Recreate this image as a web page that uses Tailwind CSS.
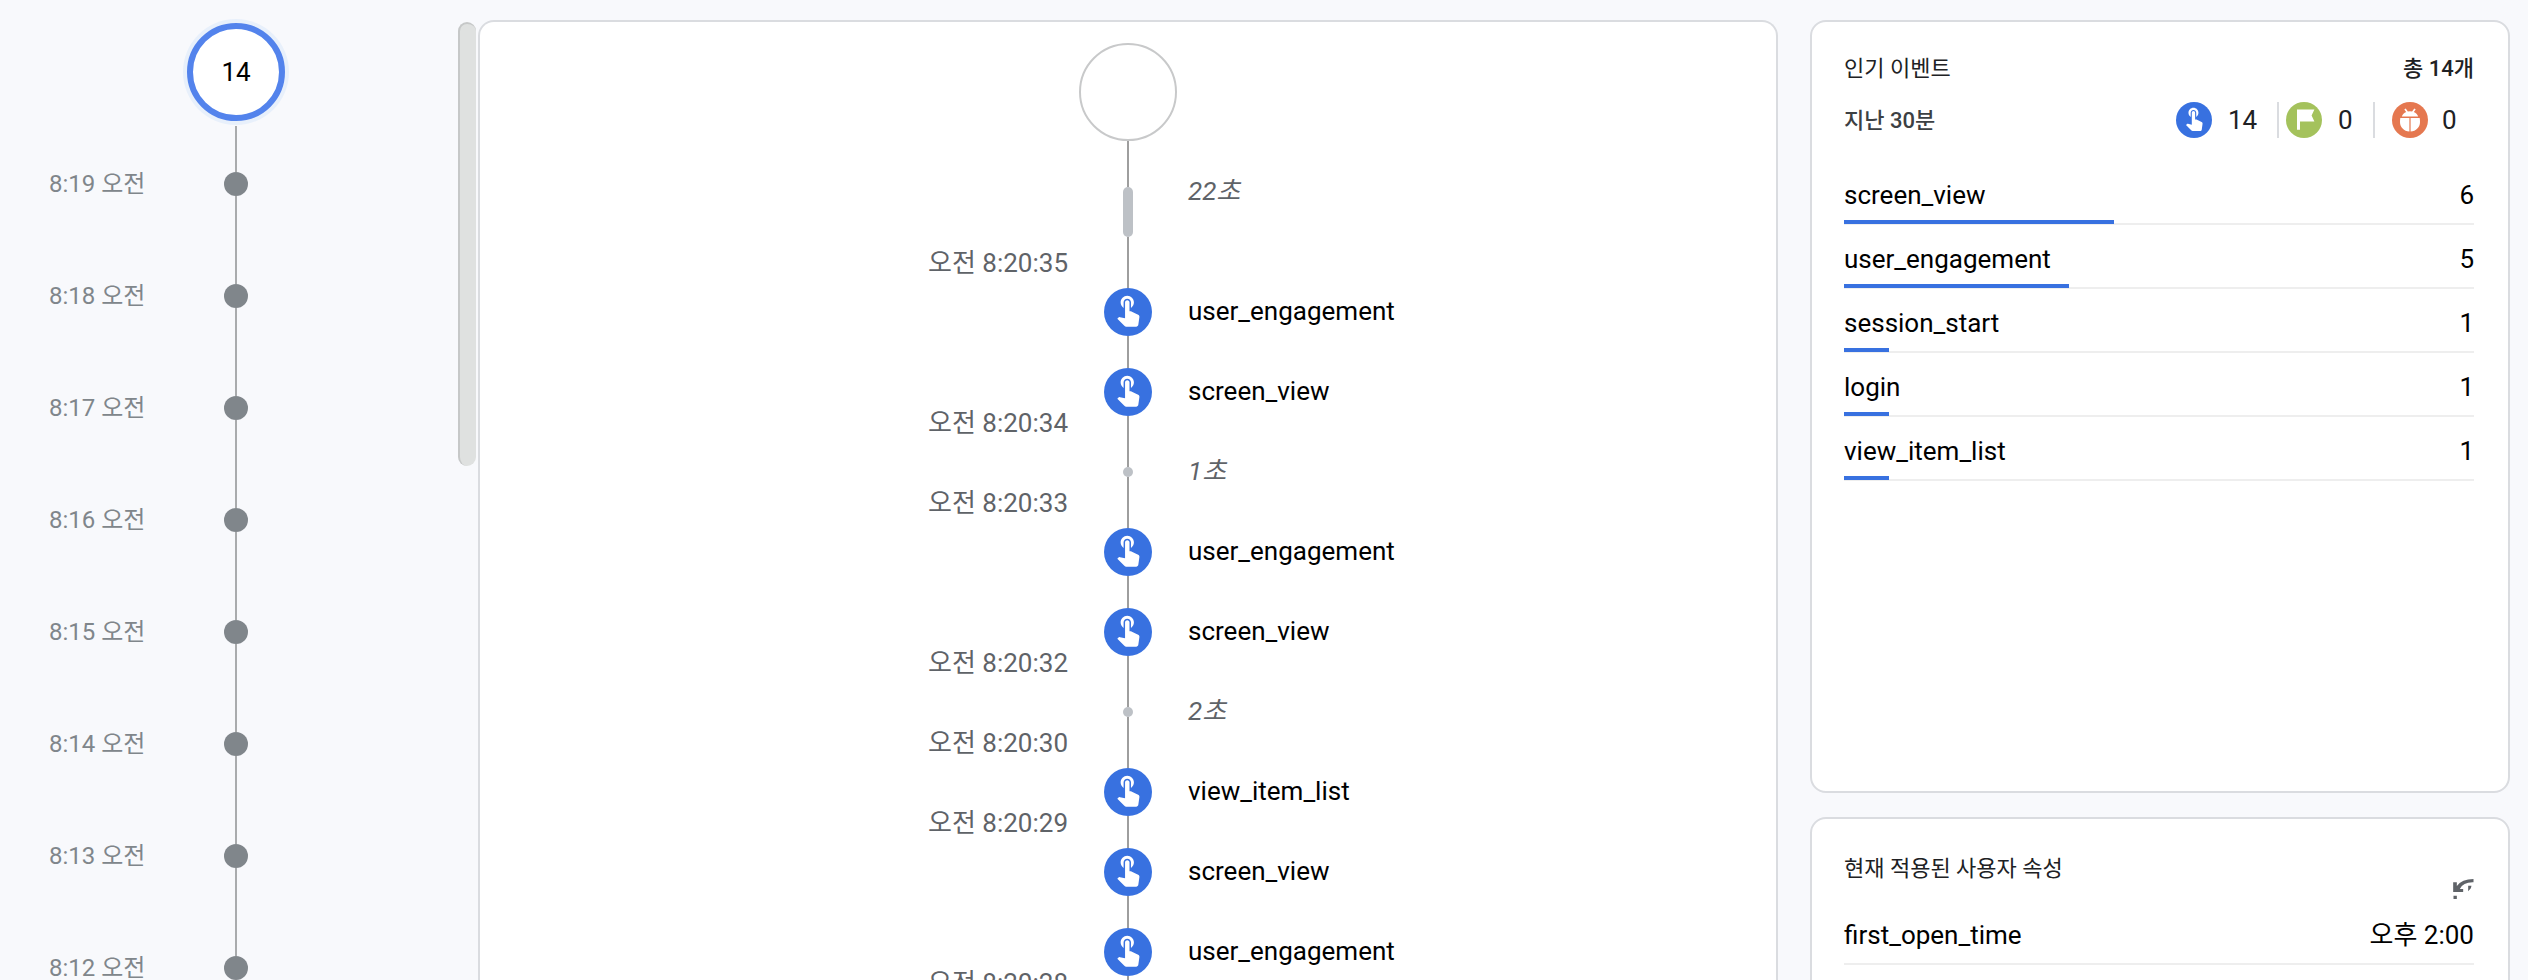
<!DOCTYPE html>
<html lang="ko">
<head>
<meta charset="utf-8">
<title>DebugView</title>
<script src="https://cdn.jsdelivr.net/npm/@tailwindcss/browser@4"></script>
</head>
<body class="flex h-screen overflow-hidden bg-[#f8f9fc] font-['Roboto','Noto_Sans_CJK_KR',sans-serif] text-[26px] text-black">

<svg class="hidden" aria-hidden="true">
  <symbol id="touch" viewBox="0 0 48 48">
    <circle cx="24" cy="24" r="24" fill="#3871e0"/>
    <path transform="translate(6.3 3.3) scale(1.476)" fill="#fff" d="M9 11.24V7.5C9 6.12 10.12 5 11.5 5S14 6.12 14 7.5v3.74c1.21-.81 2-2.18 2-3.74C16 5.01 13.99 3 11.5 3S7 5.01 7 7.5c0 1.56.79 2.93 2 3.74zm9.84 4.63l-4.54-2.26c-.17-.07-.35-.11-.54-.11H13v-6c0-.83-.67-1.5-1.5-1.5S10 6.67 10 7.5v10.74l-3.43-.72c-.08-.01-.15-.03-.24-.03-.31 0-.59.13-.79.33l-.79.8 4.94 4.94c.27.27.65.44 1.06.44h6.79c.75 0 1.33-.55 1.44-1.28l.75-5.27c.01-.07.02-.14.02-.2 0-.62-.38-1.16-.91-1.38z"/>
  </symbol>
</svg>

<aside class="w-[458px] shrink-0 pt-4 text-2xl text-[#80868b]">
  <ul>
    <li class="flex h-28">
      <span class="w-[187px]"></span>
      <div class="flex w-[98px] flex-col items-center pt-[7px]">
        <button type="button" class="mb-[5px] size-[98px] shrink-0 rounded-full border-6 border-[#5383ec] bg-white text-[26px] text-black ring-4 ring-[#e8f0fb]">14</button>
        <span class="w-0.5 flex-1 bg-[#a9abad]"></span>
      </div>
    </li>
    <li class="flex h-28 items-center"><span class="w-[187px] pl-[49px]">8:19 오전</span><div class="flex h-full w-[98px] flex-col items-center"><span class="w-0.5 flex-1 bg-[#a9abad]"></span><span class="size-6 rounded-full bg-[#80868b]"></span><span class="w-0.5 flex-1 bg-[#a9abad]"></span></div></li>
    <li class="flex h-28 items-center"><span class="w-[187px] pl-[49px]">8:18 오전</span><div class="flex h-full w-[98px] flex-col items-center"><span class="w-0.5 flex-1 bg-[#a9abad]"></span><span class="size-6 rounded-full bg-[#80868b]"></span><span class="w-0.5 flex-1 bg-[#a9abad]"></span></div></li>
    <li class="flex h-28 items-center"><span class="w-[187px] pl-[49px]">8:17 오전</span><div class="flex h-full w-[98px] flex-col items-center"><span class="w-0.5 flex-1 bg-[#a9abad]"></span><span class="size-6 rounded-full bg-[#80868b]"></span><span class="w-0.5 flex-1 bg-[#a9abad]"></span></div></li>
    <li class="flex h-28 items-center"><span class="w-[187px] pl-[49px]">8:16 오전</span><div class="flex h-full w-[98px] flex-col items-center"><span class="w-0.5 flex-1 bg-[#a9abad]"></span><span class="size-6 rounded-full bg-[#80868b]"></span><span class="w-0.5 flex-1 bg-[#a9abad]"></span></div></li>
    <li class="flex h-28 items-center"><span class="w-[187px] pl-[49px]">8:15 오전</span><div class="flex h-full w-[98px] flex-col items-center"><span class="w-0.5 flex-1 bg-[#a9abad]"></span><span class="size-6 rounded-full bg-[#80868b]"></span><span class="w-0.5 flex-1 bg-[#a9abad]"></span></div></li>
    <li class="flex h-28 items-center"><span class="w-[187px] pl-[49px]">8:14 오전</span><div class="flex h-full w-[98px] flex-col items-center"><span class="w-0.5 flex-1 bg-[#a9abad]"></span><span class="size-6 rounded-full bg-[#80868b]"></span><span class="w-0.5 flex-1 bg-[#a9abad]"></span></div></li>
    <li class="flex h-28 items-center"><span class="w-[187px] pl-[49px]">8:13 오전</span><div class="flex h-full w-[98px] flex-col items-center"><span class="w-0.5 flex-1 bg-[#a9abad]"></span><span class="size-6 rounded-full bg-[#80868b]"></span><span class="w-0.5 flex-1 bg-[#a9abad]"></span></div></li>
    <li class="flex h-28 items-center"><span class="w-[187px] pl-[49px]">8:12 오전</span><div class="flex h-full w-[98px] flex-col items-center"><span class="w-0.5 flex-1 bg-[#a9abad]"></span><span class="size-6 rounded-full bg-[#80868b]"></span><span class="w-0.5 flex-1 bg-[#a9abad]"></span></div></li>
  </ul>
</aside>

<div class="w-5 shrink-0 pt-[22px]">
  <div class="h-[444px] w-[18px] rounded-full border-t-2 border-l-2 border-[#c6c8c8] bg-[#dfe1e0]"></div>
</div>

<main class="mt-5 grid flex-1 grid-cols-[1fr_98px_1fr] content-start overflow-hidden rounded-t-2xl border-2 border-b-0 border-[#dadce0] bg-white">
  <div class="flex flex-col pt-[201px] pr-[11px] text-right text-[#5f6368]">
    <div class="flex h-20 items-center justify-end"><time>오전 8:20:35</time></div>
    <div class="h-20"></div>
    <div class="flex h-20 items-center justify-end"><time>오전 8:20:34</time></div>
    <div class="flex h-20 items-center justify-end"><time>오전 8:20:33</time></div>
    <div class="h-20"></div>
    <div class="flex h-20 items-center justify-end"><time>오전 8:20:32</time></div>
    <div class="flex h-20 items-center justify-end"><time>오전 8:20:30</time></div>
    <div class="flex h-20 items-center justify-end"><time>오전 8:20:29</time></div>
    <div class="h-20"></div>
    <div class="flex h-20 items-center justify-end"><time>오전 8:20:28</time></div>
  </div>

  <div class="flex flex-col items-center pt-[21px]">
    <span class="size-[98px] rounded-full border-2 border-[#c8c9ca]"></span>
    <span class="h-[46px] w-0.5 bg-[#9e9e9e]"></span>
    <span class="h-[50px] w-2.5 rounded-full bg-[#bdc1c6]"></span>
    <span class="h-[51px] w-0.5 bg-[#9e9e9e]"></span>
    <svg class="size-12"><use href="#touch"/></svg>
    <span class="h-8 w-0.5 bg-[#9e9e9e]"></span>
    <svg class="size-12"><use href="#touch"/></svg>
    <span class="h-[51px] w-0.5 bg-[#9e9e9e]"></span>
    <span class="size-2.5 rounded-full bg-[#bdc1c6]"></span>
    <span class="h-[51px] w-0.5 bg-[#9e9e9e]"></span>
    <svg class="size-12"><use href="#touch"/></svg>
    <span class="h-8 w-0.5 bg-[#9e9e9e]"></span>
    <svg class="size-12"><use href="#touch"/></svg>
    <span class="h-[51px] w-0.5 bg-[#9e9e9e]"></span>
    <span class="size-2.5 rounded-full bg-[#bdc1c6]"></span>
    <span class="h-[51px] w-0.5 bg-[#9e9e9e]"></span>
    <svg class="size-12"><use href="#touch"/></svg>
    <span class="h-8 w-0.5 bg-[#9e9e9e]"></span>
    <svg class="size-12"><use href="#touch"/></svg>
    <span class="h-8 w-0.5 bg-[#9e9e9e]"></span>
    <svg class="size-12"><use href="#touch"/></svg>
    <span class="h-8 w-0.5 bg-[#9e9e9e]"></span>
  </div>

  <div class="flex flex-col pt-[129px] pl-[11px]">
    <div class="mb-10 flex h-20 items-center text-[#5f6368] italic">22초</div>
    <div class="flex h-20 items-center">user_engagement</div>
    <div class="flex h-20 items-center">screen_view</div>
    <div class="flex h-20 items-center text-[#5f6368] italic">1초</div>
    <div class="flex h-20 items-center">user_engagement</div>
    <div class="flex h-20 items-center">screen_view</div>
    <div class="flex h-20 items-center text-[#5f6368] italic">2초</div>
    <div class="flex h-20 items-center">view_item_list</div>
    <div class="flex h-20 items-center">screen_view</div>
    <div class="flex h-20 items-center">user_engagement</div>
  </div>
</main>

<div class="mr-[18px] ml-8 flex w-[700px] shrink-0 flex-col gap-6 pt-5">
  <section class="h-[773px] shrink-0 rounded-2xl border-2 border-[#dadce0] bg-white pt-[30px] pr-[34px] pl-8">
    <header class="flex h-8 items-center justify-between text-[22px] text-[#202124]">
      <h2>인기 이벤트</h2>
      <span class="font-medium">총 14개</span>
    </header>
    <div class="mt-[18px] mb-[23px] flex h-9 items-center text-[#202124]">
      <h3 class="flex-1 text-[22px] font-medium text-[#3c4043]">지난 30분</h3>
      <div class="flex h-9 w-[101px] items-center gap-4"><svg class="size-9"><use href="#touch"/></svg>14</div>
      <div class="flex h-9 w-24 items-center gap-4 border-l-2 border-[#dadce0] pl-[7px]">
        <svg class="size-9" viewBox="0 0 36 36"><circle cx="18" cy="18" r="18" fill="#a4c25c"/><path fill="#fff" d="M11 7.400h17.400l-2.800 6 2.800 6.200H14v8.200h-3z"/></svg>0
      </div>
      <div class="flex h-9 w-[101px] items-center gap-[14px] border-l-2 border-[#dadce0] pl-[17px]">
        <svg class="size-9" viewBox="0 0 36 36"><circle cx="18" cy="18" r="18" fill="#e57850"/><g fill="#fff"><path d="M9.800 14.400c.8-2.200 2.300-3.700 4.400-4.500l-1.900-2.500 1.400-.9 2.200 2.900q2.100-.5 4.200 0l2.200-2.900 1.400.9-1.900 2.500c2.100.8 3.600 2.300 4.400 4.500z"/><path d="M8.300 15.900h9.100v13.600c-5.500-.3-9.400-4.200-9.400-9.500 0-1.500.1-2.800.3-4.100zM18.600 15.900h9.100c.2 1.300.3 2.600.3 4.100 0 5.300-3.900 9.200-9.400 9.500z"/></g></svg>0
      </div>
    </div>
    <ul>
      <li class="relative flex h-16 items-center justify-between border-b-2 border-[#eeeeee] pt-1.5"><span>screen_view</span><span>6</span><i class="absolute -bottom-px left-0 h-1 bg-[#3871e0]" style="width:42.857%"></i></li>
      <li class="relative flex h-16 items-center justify-between border-b-2 border-[#eeeeee] pt-1.5"><span>user_engagement</span><span>5</span><i class="absolute -bottom-px left-0 h-1 bg-[#3871e0]" style="width:35.714%"></i></li>
      <li class="relative flex h-16 items-center justify-between border-b-2 border-[#eeeeee] pt-1.5"><span>session_start</span><span>1</span><i class="absolute -bottom-px left-0 h-1 bg-[#3871e0]" style="width:7.143%"></i></li>
      <li class="relative flex h-16 items-center justify-between border-b-2 border-[#eeeeee] pt-1.5"><span>login</span><span>1</span><i class="absolute -bottom-px left-0 h-1 bg-[#3871e0]" style="width:7.143%"></i></li>
      <li class="relative flex h-16 items-center justify-between border-b-2 border-[#eeeeee] pt-1.5"><span>view_item_list</span><span>1</span><i class="absolute -bottom-px left-0 h-1 bg-[#3871e0]" style="width:7.143%"></i></li>
    </ul>
  </section>

  <section class="min-h-[300px] shrink-0 rounded-2xl border-2 border-[#dadce0] bg-white pt-[34px] pr-[34px] pl-8">
    <header class="flex h-12 items-start justify-between">
      <h2 class="text-[22px] leading-8 text-[#202124]">현재 적용된 사용자 속성</h2>
      <button type="button" aria-label="기록" class="self-end pb-0.5">
        <svg class="h-5 w-[21px]" viewBox="0 0 62 60" fill="#5f6368"><path d="M0 10h11v11Q26 0 61 0v10Q30 9 20 30h10v9H0zM45 20h10l-2 8-8 9zM1 50h10v10H1z"/></svg>
      </button>
    </header>
    <ul>
      <li class="flex h-16 items-center justify-between border-b-2 border-[#eeeeee] pt-1.5"><span>first_open_time</span><span>오후 2:00</span></li>
    </ul>
  </section>
</div>
</body>
</html>
